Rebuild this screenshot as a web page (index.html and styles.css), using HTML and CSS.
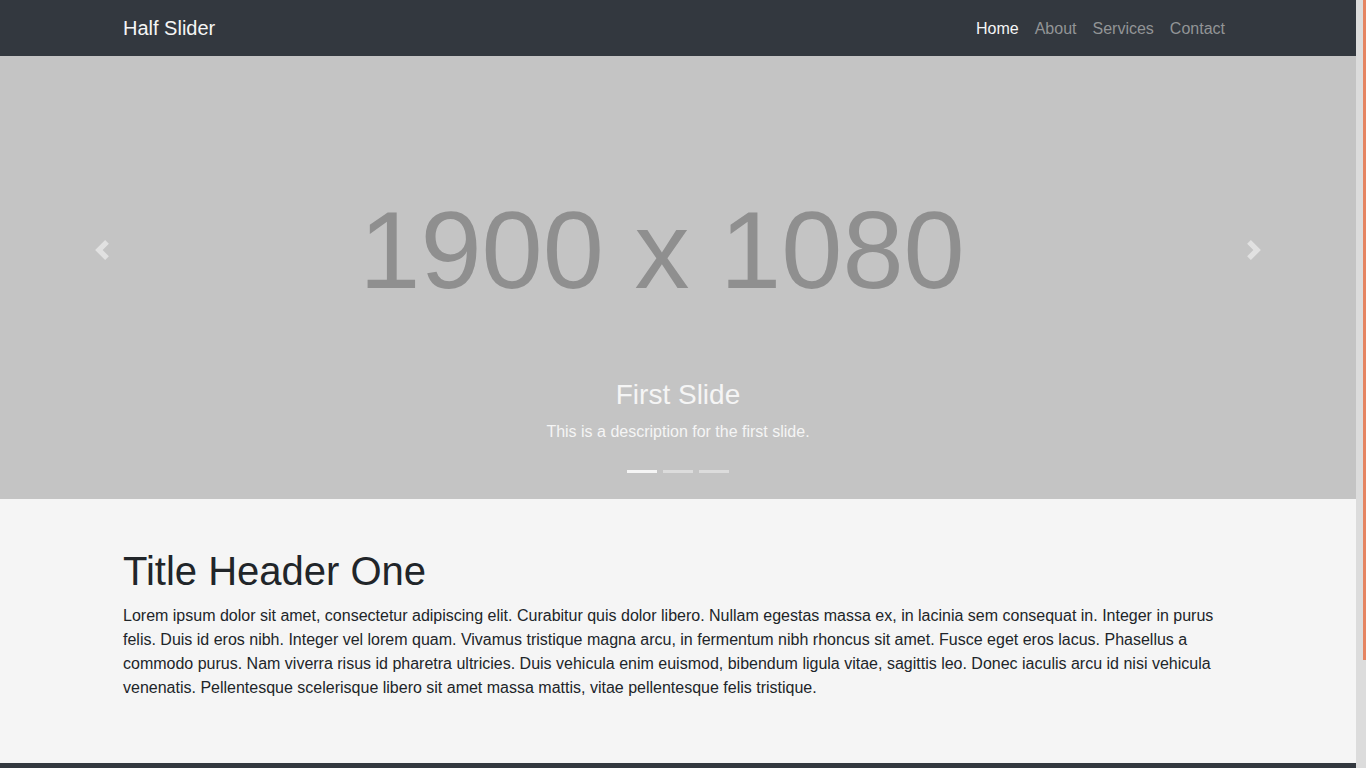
FILE: index.html
```html
<!DOCTYPE html>
<html lang="en">
<head>
<meta charset="utf-8">
<meta name="viewport" content="width=device-width, initial-scale=1">
<title>Half Slider</title>
<link rel="stylesheet" href="styles.css">
</head>
<body>
<div class="page">
  <nav class="navbar">
    <div class="container navbar-inner">
      <a class="brand" href="#">Half Slider</a>
      <ul class="nav-list">
        <li><a class="nav-link active" href="#">Home</a></li>
        <li><a class="nav-link" href="#">About</a></li>
        <li><a class="nav-link" href="#">Services</a></li>
        <li><a class="nav-link" href="#">Contact</a></li>
      </ul>
    </div>
  </nav>
  <header class="carousel">
    <div class="slide">1900 x 1080</div>
    <button class="control prev" type="button" aria-label="Previous">
      <svg width="20" height="20" viewBox="0 0 8 8" fill="#fff"><path d="M5.25 0l-4 4 4 4 1.5-1.5-2.5-2.5 2.5-2.5-1.5-1.5z"/></svg>
    </button>
    <button class="control next" type="button" aria-label="Next">
      <svg width="20" height="20" viewBox="0 0 8 8" fill="#fff"><path d="M2.75 0l-1.5 1.5 2.5 2.5-2.5 2.5 1.5 1.5 4-4-4-4z"/></svg>
    </button>
    <div class="caption">
      <h3>First Slide</h3>
      <p>This is a description for the first slide.</p>
    </div>
    <div class="indicators">
      <button class="indicator active" type="button" aria-label="Slide 1"></button>
      <button class="indicator" type="button" aria-label="Slide 2"></button>
      <button class="indicator" type="button" aria-label="Slide 3"></button>
    </div>
  </header>
  <section class="content">
    <div class="container">
      <h1>Title Header One</h1>
      <p>Lorem ipsum dolor sit amet, consectetur adipiscing elit. Curabitur quis dolor libero. Nullam egestas massa ex, in lacinia sem consequat in. Integer in purus felis. Duis id eros nibh. Integer vel lorem quam. Vivamus tristique magna arcu, in fermentum nibh rhoncus sit amet. Fusce eget eros lacus. Phasellus a commodo purus. Nam viverra risus id pharetra ultricies. Duis vehicula enim euismod, bibendum ligula vitae, sagittis leo. Donec iaculis arcu id nisi vehicula venenatis. Pellentesque scelerisque libero sit amet massa mattis, vitae pellentesque felis tristique.</p>
    </div>
  </section>
  <footer class="footer"></footer>
</div>
<div class="scroll-track" aria-hidden="true"><div class="scroll-thumb"></div></div>
</body>
</html>
```
FILE: styles.css
```css
* { box-sizing: border-box; }

body {
  display: flex;
  height: 100vh;
  margin: 0;
  overflow: hidden;
  background: #f5f5f5;
  color: #212529;
  font: 16px/24px "Liberation Sans", Arial, sans-serif;
}

h1, h3, p { margin: 0; font-weight: 400; }
a { text-decoration: none; }
button { border: 0; padding: 0; background: none; cursor: pointer; }

.page {
  position: relative;
  display: flex;
  flex: 1;
  flex-direction: column;
  min-width: 0;
}

.container {
  width: 100%;
  max-width: 1140px;
  margin: 0 auto;
  padding: 0 15px;
}

.navbar {
  position: absolute;
  top: 0;
  right: 0;
  left: 0;
  z-index: 2;
  padding: 8px 0;
  background: #33383f;
}

.navbar-inner {
  display: flex;
  align-items: center;
  justify-content: space-between;
}

.brand { color: #f5f5f5; font-size: 20px; line-height: 30px; }

.nav-list {
  display: flex;
  margin: 0;
  padding: 0;
  list-style: none;
}

.nav-link { display: block; padding: 9px 8px 7px; color: #929496; }
.nav-link.active { color: #f5f5f5; }

.carousel {
  position: relative;
  flex: none;
  height: 65vh;
  background: #c4c4c4;
}

.slide {
  display: flex;
  align-items: center;
  justify-content: center;
  height: 100%;
  padding-right: 32px;
  color: #8f8f8f;
  font: 110px/1 "Liberation Sans Narrow", "Arial Narrow", "Liberation Sans", sans-serif;
  white-space: nowrap;
}

.control {
  position: absolute;
  top: 0;
  bottom: 0;
  display: flex;
  align-items: center;
  justify-content: center;
  width: 15%;
  opacity: 0.5;
}

.prev { left: 0; }
.next { right: 0; }

.caption {
  position: absolute;
  right: 15%;
  bottom: 55px;
  left: 15%;
  color: #f5f5f5;
  text-align: center;
}

.caption h3 { margin-bottom: 8px; font-size: 28px; line-height: 34px; }

.indicators {
  position: absolute;
  right: 15%;
  bottom: 26px;
  left: 15%;
  display: flex;
  gap: 6px;
  justify-content: center;
}

.indicator { width: 30px; height: 3px; background: #dcdcdc; }
.indicator.active { background: #f5f5f5; }

.content { padding: 48px 0 63px; }
.content h1 { margin-bottom: 9px; font-size: 40px; line-height: 48px; }

.footer { flex: 1; background: #33383f; }

.scroll-track {
  display: flex;
  justify-content: flex-end;
  width: 10px;
  background: #dcdcdc;
}

.scroll-thumb { width: 3px; height: 86%; background: #e58461; }
```
